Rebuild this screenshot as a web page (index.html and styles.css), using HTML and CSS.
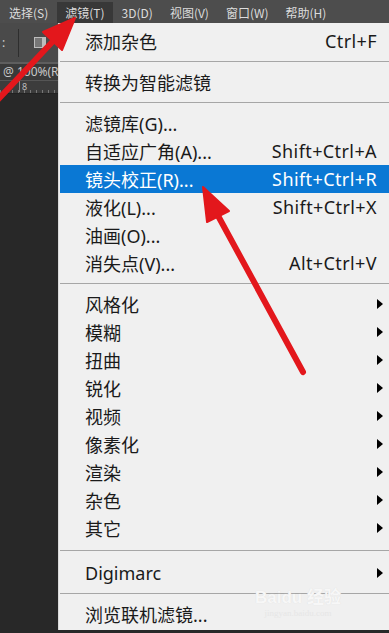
FILE: index.html
```html
<!DOCTYPE html>
<html lang="zh-CN">
<head>
    <meta charset="UTF-8">
    <meta name="viewport" content="width=device-width, initial-scale=1.0">
    <title>滤镜菜单</title>
    <link rel="stylesheet" href="styles.css">
</head>
<body>
<div class="screen">
    <div class="menubar">
        <span class="mb-item">选择(S)</span>
        <span class="mb-item active">滤镜(T)</span>
        <span class="mb-item">3D(D)</span>
        <span class="mb-item">视图(V)</span>
        <span class="mb-item">窗口(W)</span>
        <span class="mb-item">帮助(H)</span>
    </div>

    <div class="workspace">
        <div class="side">
            <div class="toolbar">
                <span class="tb-dots">:</span>
                <span class="tb-sep"></span>
                <span class="tb-icon"></span>
            </div>
            <div class="doc-tab">@ 100%(R</div>
            <div class="ruler"><span>8</span></div>
            <div class="canvas"></div>
        </div>

        <div class="menu">
            <div class="row"><span>添加杂色</span><span class="key">Ctrl+F</span></div>
            <div class="sep"></div>
            <div class="row"><span>转换为智能滤镜</span></div>
            <div class="sep"></div>
            <div class="row"><span>滤镜库(G)...</span></div>
            <div class="row"><span>自适应广角(A)...</span><span class="key">Shift+Ctrl+A</span></div>
            <div class="row selected"><span>镜头校正(R)...</span><span class="key">Shift+Ctrl+R</span></div>
            <div class="row"><span>液化(L)...</span><span class="key">Shift+Ctrl+X</span></div>
            <div class="row"><span>油画(O)...</span></div>
            <div class="row"><span>消失点(V)...</span><span class="key">Alt+Ctrl+V</span></div>
            <div class="sep"></div>
            <div class="row"><span>风格化</span><i class="sub"></i></div>
            <div class="row"><span>模糊</span><i class="sub"></i></div>
            <div class="row"><span>扭曲</span><i class="sub"></i></div>
            <div class="row"><span>锐化</span><i class="sub"></i></div>
            <div class="row"><span>视频</span><i class="sub"></i></div>
            <div class="row"><span>像素化</span><i class="sub"></i></div>
            <div class="row"><span>渲染</span><i class="sub"></i></div>
            <div class="row"><span>杂色</span><i class="sub"></i></div>
            <div class="row"><span>其它</span><i class="sub"></i></div>
            <div class="sep wide"></div>
            <div class="row"><span>Digimarc</span><i class="sub"></i></div>
            <div class="sep"></div>
            <div class="row"><span>浏览联机滤镜...</span></div>

            <div class="watermark">
                <div class="wm-logo">Bai<b>du</b> 经验</div>
                <div class="wm-url">jingyan.baidu.com</div>
            </div>
        </div>
    </div>

    <!-- the two red pointer arrows drawn over the screenshot -->
    <svg class="arrows" width="389" height="633" viewBox="0 0 389 633">
        <g fill="#e3171c" stroke="#e3171c" stroke-linecap="round" stroke-linejoin="round">
            <line x1="-10" y1="108" x2="56" y2="38" stroke-width="6"/>
            <polygon points="75,18 62,50 43,32" stroke-width="2"/>
            <line x1="303" y1="372" x2="216" y2="212" stroke-width="6"/>
            <polygon points="203,187 229,211 207,222" stroke-width="2"/>
        </g>
    </svg>
</div>
</body>
</html>
```

FILE: styles.css
```css
body { margin: 0; background: #282828; font-family: "Noto Sans", "Noto Sans CJK SC", sans-serif; }
.screen { position: relative; width: 389px; height: 633px; overflow: hidden; background: #282828; }

.menubar { height: 23px; padding-top: 2px; box-sizing: border-box; background: #4d4d4d; display: flex; padding-left: 1px; }
.mb-item { color: #dcdcdc; font-size: 12px; line-height: 21px; padding: 0 8px; margin-right: 1px; font-family: "Noto Sans CJK SC", sans-serif; }
.mb-item.active { background: #383838; }

.workspace { display: flex; height: 610px; }

.side { width: 58px; flex: none; display: flex; flex-direction: column; }
.toolbar { height: 39px; background: #4a4a4a; display: flex; align-items: center; border-bottom: 2px solid #5e5e5e; }
.tb-dots { color: #cfcfcf; font-size: 12px; width: 16px; padding-left: 2px; }
.tb-sep { width: 1px; height: 28px; background: #2e2e2e; }
.tb-icon { width: 7px; height: 9px; margin-left: 15px; border: 1px solid #bdbdbd; border-right-width: 4px; background: #777; }
.doc-tab { height: 16px; background: #3a3a3a; color: #c8c8c8; font-size: 12px; line-height: 16px; padding-left: 3px; white-space: nowrap; overflow: hidden; }
.ruler { height: 12px; background: #3c3c3c; border-top: 1px solid #555; border-bottom: 1px solid #222; padding-left: 19px;
         background-image: repeating-linear-gradient(90deg, #777 0 1px, transparent 1px 6px); background-size: 100% 3px; background-repeat: no-repeat; background-position: 0 100%; }
.ruler span { color: #bbb; font-size: 9px; line-height: 11px; display: block; border-left: 1px solid #888; padding-left: 2px; }
.canvas { flex: 1; background: #282828; }

.menu { position: relative; flex: 1; background: #f0f0f0; border-left: 1px solid #dadada; padding: 4px 0 2px 1px; box-sizing: border-box; height: 607px; }
.row { display: flex; align-items: center; height: 28px; padding: 0 12px 0 25px; font-size: 18px; color: #1a1a1a; white-space: nowrap; }
.row.selected { background: #0a78d4; color: #fff; }
.key { margin-left: auto; letter-spacing: 0.4px; }
.sub { margin-left: auto; margin-right: -6px; width: 0; height: 0; border-top: 5px solid transparent; border-bottom: 5px solid transparent; border-left: 6px solid #000; }
.sep { height: 1px; background: #a6a6a6; margin: 6px 0 6px; }
.sep.wide { margin: 8px 0 8px; }

.watermark { position: absolute; left: 196px; top: 560px; text-align: center; color: #f7f7f7; text-shadow: 0 0 1px #dcdcdc; pointer-events: none; }
.wm-logo { font-size: 17px; font-weight: bold; font-family: "Liberation Sans", "Noto Sans CJK SC", sans-serif; }
.wm-logo b { font-weight: bold; }
.wm-url { font-size: 9px; font-family: "Liberation Serif", serif; color: #e6e6e6; text-shadow: none; }

.arrows { position: absolute; left: 0; top: 0; pointer-events: none; }
```
